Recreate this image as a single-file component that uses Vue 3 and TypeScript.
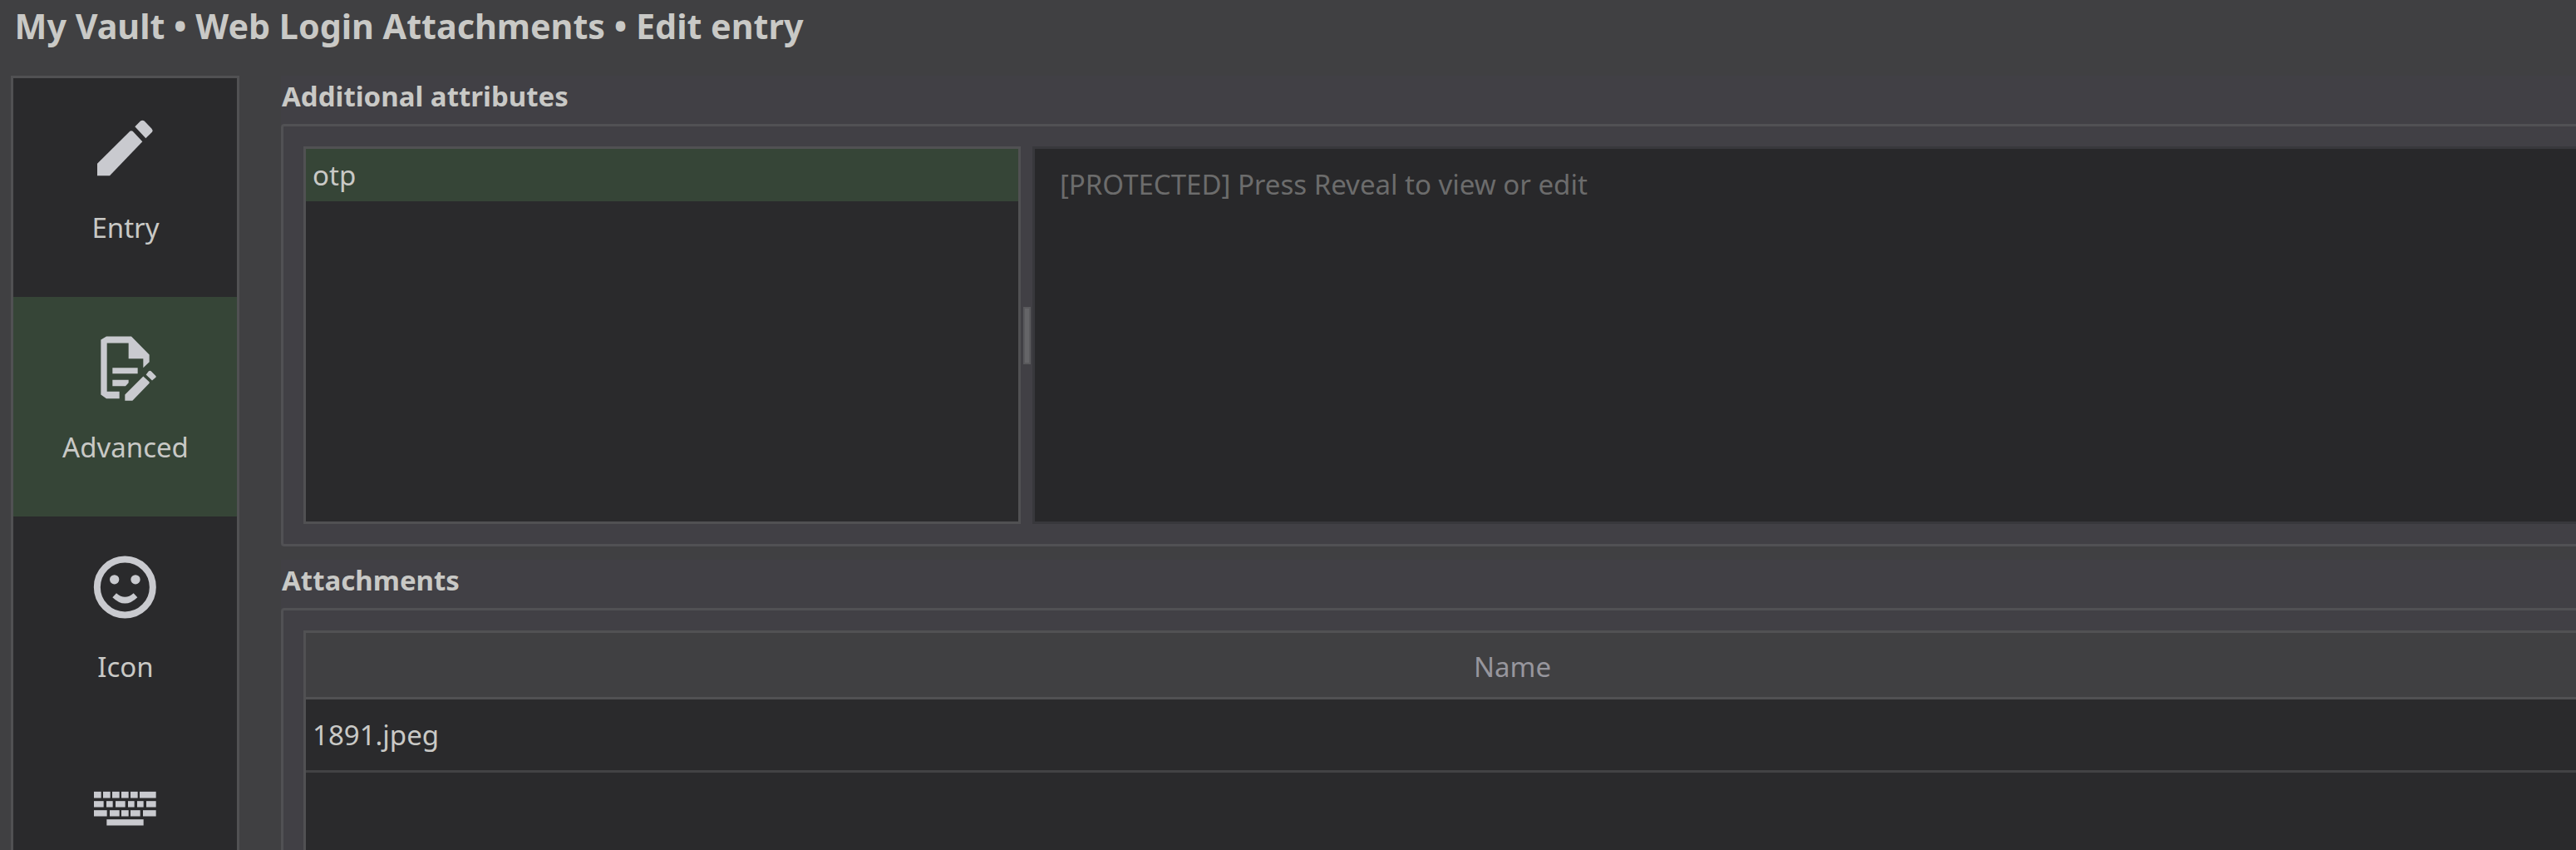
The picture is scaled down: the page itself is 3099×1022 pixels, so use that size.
<script setup lang="ts">
interface Tab {
  id: string
  label: string
  viewBox: string
}

const tabs: Tab[] = [
  { id: 'entry', label: 'Entry', viewBox: '318 160.5 268 268' },
  { id: 'advanced', label: 'Advanced', viewBox: '318 172.5 268 268' },
  { id: 'icon', label: 'Icon', viewBox: '318 124.5 268 268' },
  { id: 'autotype', label: '', viewBox: '318 916.5 268 268' },
]
const selected = 'advanced'

// Each key is x, y, width, height
const keys: number[][] = [
  [339, 997, 26, 23], [372, 997, 26, 23], [405, 997, 26, 23], [438, 997, 26, 23], [471, 997, 26, 23], [504, 997, 59, 23],
  [339, 1031, 35, 22], [384, 1031, 23, 22], [417, 1031, 35, 22], [462, 1031, 23, 22], [495, 1031, 23, 22], [528, 1031, 35, 22],
  [339, 1064, 47, 22], [396, 1064, 35, 22], [438, 1064, 26, 22], [471, 1064, 35, 22], [516, 1064, 47, 22],
  [385, 1097, 133, 22],
]

const attributes: string[] = ['otp']
const attachments: string[] = ['1891.jpeg']
</script>

<template>
  <div class="window">
    <header class="title">My Vault • Web Login Attachments • Edit entry</header>
    <div class="body">
      <nav class="sidebar">
        <div v-for="t in tabs" :key="t.id" class="tab" :class="{ active: t.id === selected }">
          <svg class="tab-icon" :viewBox="t.viewBox">
            <template v-if="t.id === 'entry'">
              <path d="M351 395V352L469 235Q474 231 479 235L514 272L396 395Z" />
              <path d="M487 218L507 198Q514 193 521 198L547 225Q553 231 549 238L526 260Z" />
            </template>
            <template v-else-if="t.id === 'advanced'">
              <path d="M364 207L384 195H474L539 261V287L517 308V275H464V219H386V394H431V419H384L364 405Z" />
              <path d="M406 308H497V329H406ZM406 352H464V362L453 374H406Z" />
              <path d="M517 339L539 359V364L478 427H451V405ZM536 321Q541 317 546 321L563 338V342L549 354L527 333Z" />
            </template>
            <template v-else-if="t.id === 'icon'">
              <circle class="ring" cx="451" cy="259.5" r="100.5" />
              <circle cx="413" cy="232" r="17" />
              <circle cx="489" cy="232" r="17" />
              <path d="M406 296L420 281Q451 308 482 281L496 296Q451 340 406 296Z" />
            </template>
            <template v-else>
              <rect v-for="(k, i) in keys" :key="i" :x="k[0]" :y="k[1]" :width="k[2]" :height="k[3]" />
            </template>
          </svg>
          <span v-if="t.label" class="tab-label">{{ t.label }}</span>
        </div>
      </nav>
      <main class="content">
        <section class="group">
          <h2 class="group-title">Additional attributes</h2>
          <div class="frame attrs">
            <div class="list">
              <div v-for="a in attributes" :key="a" class="list-item">{{ a }}</div>
            </div>
            <div class="splitter"><div class="grip"></div></div>
            <div class="editor">[PROTECTED] Press Reveal to view or edit</div>
          </div>
        </section>
        <section class="group">
          <h2 class="group-title">Attachments</h2>
          <div class="frame files">
            <div class="table">
              <div class="table-head">Name</div>
              <div v-for="f in attachments" :key="f" class="table-row">{{ f }}</div>
            </div>
          </div>
        </section>
      </main>
    </div>
  </div>
</template>

<style>
body {
  margin: 0;
  background: #404042;
}
</style>

<style scoped>
.window {
  width: 3099px;
  height: 1022px;
  overflow: hidden;
  display: flex;
  flex-direction: column;
  background: #404042;
  color: #c9c9c6;
  font-family: "Noto Sans", sans-serif;
  font-size: 33px;
  white-space: nowrap;
}
.title {
  flex: none;
  height: 91px;
  padding-left: 17.5px;
  box-sizing: border-box;
  font-size: 41.25px;
  font-weight: 700;
  line-height: 62px;
}
.body {
  display: flex;
  gap: 50px;
  padding-left: 13px;
}
.sidebar {
  flex: none;
  box-sizing: border-box;
  width: 275px;
  height: 1100px;
  border: 3px solid #515153;
  background: #2a2a2c;
}
.tab {
  display: flex;
  flex-direction: column;
  align-items: center;
  height: 264px;
  padding-top: 40px;
  box-sizing: border-box;
}
.tab:first-child {
  height: 263px;
  padding-top: 39px;
}
.tab.active {
  background: #364537;
}
.tab-icon {
  flex: none;
  width: 89.33px;
  height: 89.33px;
  fill: #c9cacf;
}
.ring {
  fill: none;
  stroke: #c9cacf;
  stroke-width: 24;
}
.tab-label {
  margin-top: 28px;
  padding-left: 1px;
  line-height: 48px;
}
.content {
  flex: none;
  width: 3000px;
  display: flex;
  flex-direction: column;
  gap: 16px;
}
.group {
  background: #414045;
}
.group-title {
  margin: 0;
  height: 58px;
  padding-left: 1px;
  font-size: 33px;
  font-weight: 700;
  line-height: 49px;
}
.frame {
  box-sizing: border-box;
  border: 3px solid #515154;
  border-radius: 4px;
  padding: 24px;
}
.attrs {
  display: flex;
  height: 508px;
}
.list {
  flex: none;
  box-sizing: border-box;
  width: 863px;
  border: 3px solid #515153;
  background: #2a2a2c;
}
.list-item {
  height: 63px;
  padding-left: 8px;
  background: #364537;
  line-height: 64px;
}
.splitter {
  flex: none;
  width: 14px;
  display: flex;
  align-items: center;
  justify-content: center;
}
.grip {
  width: 5px;
  height: 65px;
  border: 2px solid #59595c;
  background: #656568;
}
.editor {
  flex: 1;
  border: 3px solid #38383c;
  background: #28282a;
  padding-left: 30px;
  color: #6c6c6c;
  line-height: 85px;
}
.files {
  height: 600px;
}
.table {
  box-sizing: border-box;
  width: 2909px;
  height: 540px;
  border: 3px solid #515153;
  background: #2a2a2c;
}
.table-head {
  height: 77px;
  border-bottom: 3px solid #515153;
  background: #404042;
  color: #97969d;
  line-height: 81px;
  text-align: center;
}
.table-row {
  height: 85px;
  padding-left: 8px;
  border-bottom: 3px solid #424244;
  line-height: 86px;
}
</style>
